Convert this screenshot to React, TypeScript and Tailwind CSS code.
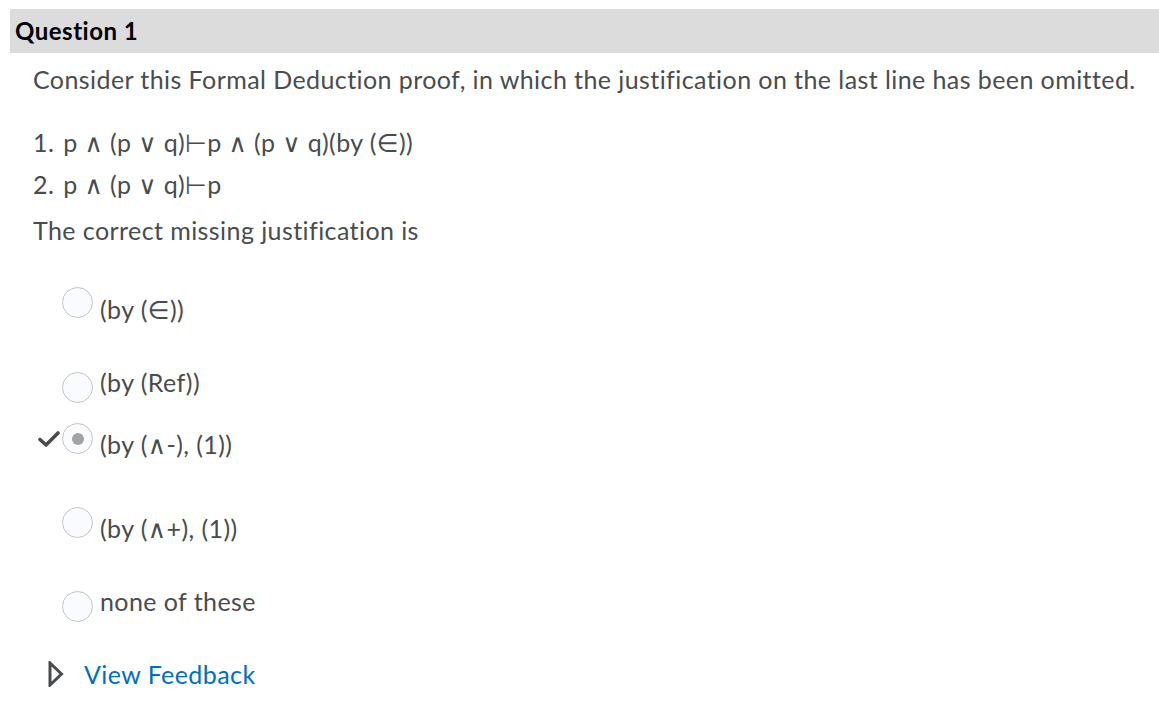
import React from "react";

const Radio = ({ checked, mt }: { checked?: boolean; mt: string }) => (
  <div
    className={`w-[31px] h-[31px] shrink-0 rounded-full border border-[#c4c4c4] bg-[#f9fbff] flex items-center justify-center ${mt}`}
  >
    {checked && <div className="w-[12px] h-[12px] rounded-full bg-[#a3a3a3]" />}
  </div>
);

const Check = () => (
  <svg width="22" height="16" viewBox="0 0 22 16" className="mt-[8px]">
    <path d="M2 8.5 L8 14 L20 2" fill="none" stroke="#494c4e" strokeWidth="3.6" strokeLinecap="round" strokeLinejoin="round" />
  </svg>
);

export default function App() {
  const font = {
    fontFamily: "Lato, 'Noto Sans', 'DejaVu Sans', sans-serif",
    fontVariantLigatures: "none" as const,
  };
  return (
    <div className="pt-[9px] pl-[10px] bg-white min-h-[717px] text-[#494c4e]" style={font}>
      <div className="h-[44px] bg-[#dcdcdc] flex items-center pl-[5px]">
        <span className="text-[24px] font-bold text-[#000] leading-none tracking-[0.5px]">Question 1</span>
      </div>
      <div className="pl-[23px] text-[25px] leading-[30px] tracking-[0.42px]">
        <div className="mt-[11px] whitespace-nowrap">Consider this Formal Deduction proof, in which the justification on the last line has been omitted.</div>
        <div className="mt-[33px] flex">
          <span className="mr-[9px]">1.</span>
          <span>p ∧ (p ∨ q)⊢p ∧ (p ∨ q)(by (∈))</span>
        </div>
        <div className="mt-[12px] flex">
          <span className="mr-[9px]">2.</span>
          <span>p ∧ (p ∨ q)⊢p</span>
        </div>
        <div className="mt-[16px]">The correct missing justification is</div>

        <div className="ml-[5px] flex flex-col">
          <div className="mt-[42px] flex items-start">
            <div className="w-[24px] shrink-0" />
            <Radio mt="mt-0" />
            <span className="ml-[7px] mt-[7px]">(by (∈))</span>
          </div>
          <div className="mt-[43px] flex items-start">
            <div className="w-[24px] shrink-0" />
            <Radio mt="mt-[5px]" />
            <span className="ml-[7px]">(by (Ref))</span>
          </div>
          <div className="mt-[20px] flex items-start">
            <div className="w-[24px] shrink-0">
              <Check />
            </div>
            <Radio checked mt="mt-0" />
            <span className="ml-[7px] mt-[6px]">(by (∧-), (1))</span>
          </div>
          <div className="mt-[48px] flex items-start">
            <div className="w-[24px] shrink-0" />
            <Radio mt="mt-0" />
            <span className="ml-[7px] mt-[6px]">(by (∧+), (1))</span>
          </div>
          <div className="mt-[43px] flex items-start">
            <div className="w-[24px] shrink-0" />
            <Radio mt="mt-[5px]" />
            <span className="ml-[7px]">none of these</span>
          </div>
        </div>

        <div className="mt-[37px] ml-[15px] flex items-center">
          <svg width="16" height="26" viewBox="0 0 16 26">
            <path d="M2 2 L13.5 13 L2 24 Z" fill="none" stroke="#494c4e" strokeWidth="3" strokeLinejoin="miter" />
          </svg>
          <span className="ml-[20px] text-[#006fbf]">View Feedback</span>
        </div>
      </div>
    </div>
  );
}
